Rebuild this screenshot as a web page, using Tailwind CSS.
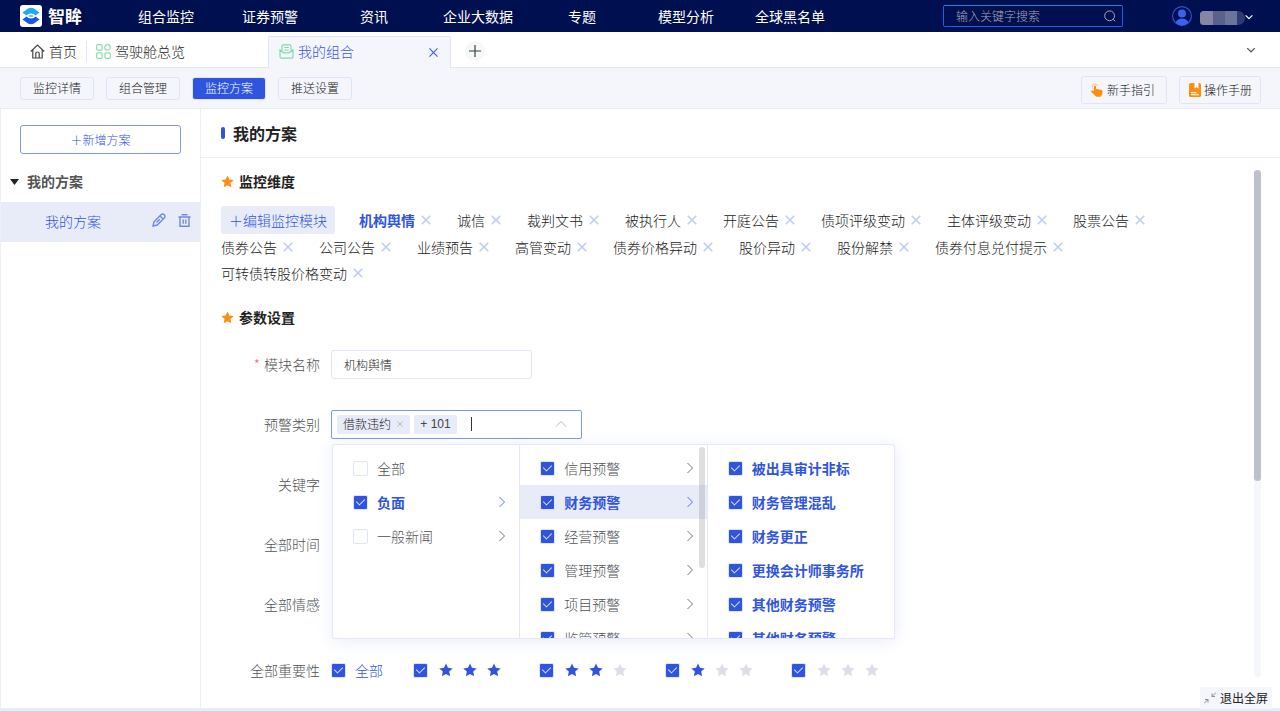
<!DOCTYPE html>
<html lang="zh-CN">
<head>
<meta charset="utf-8">
<meta name="viewport" content="width=device-width, initial-scale=1">
<title>智眸 - 我的组合</title>
<script src="https://cdn.jsdelivr.net/npm/@tailwindcss/browser@4"></script>
</head>
<body class="flex min-h-screen flex-col bg-[#f4f6fc] font-['Noto_Sans_CJK_SC',sans-serif] text-sm/5 font-light text-[#222] [&_button]:cursor-pointer">

<svg class="hidden" aria-hidden="true">
  <symbol id="x" viewBox="0 0 10 10"><path d="M.7.7l8.6 8.6M9.3.7L.7 9.3" fill="none" stroke="currentColor" stroke-width="1.6"/></symbol>
  <symbol id="right" viewBox="0 0 8 12"><path d="M1.500 1l5 5-5 5" fill="none" stroke="currentColor" stroke-opacity=".8"/></symbol>
  <symbol id="down" viewBox="0 0 12 8"><path d="M1 1.500l5 5 5-5" fill="none" stroke="currentColor" stroke-width="1.800"/></symbol>
  <symbol id="star" viewBox="0 0 14 14"><path d="M7 .5l2 4.300 4.700.6-3.500 3.200.9 4.700L7 11l-4.100 2.300.9-4.700L.3 5.400l4.700-.6z" fill="currentColor"/></symbol>
</svg>

<header class="flex h-8 items-center bg-[#000f4f] text-white">
  <a href="#" class="flex w-[114px] shrink-0 items-center gap-1.5 pl-5 text-[17px] font-bold">
    <svg class="size-[22px]" viewBox="0 0 22 22"><rect width="22" height="22" rx="3" fill="#fff"/><path d="M2.500 7.500L8 3.600Q11 2 14 3.600L19.500 7.500 15.500 10.600Q14 8.600 11 8.600T6.500 10.600z" fill="#25a6f7"/><path d="M2.500 14.500L6.500 11.400Q8 13.400 11 13.400t4.500-2L19.500 14.500 14 18.400Q11 20 8 18.400z" fill="#1456ee"/><path d="M8 11q3-2.200 6 0-3 2-6 0z" fill="#4dc6f8"/></svg>智眸</a>
  <nav class="flex text-center font-normal [&_a]:w-26">
    <a href="#">组合监控</a><a href="#">证券预警</a><a href="#">资讯</a><a href="#">企业大数据</a><a href="#">专题</a><a href="#">模型分析</a><a href="#">全球黑名单</a>
  </nav>
  <label class="ml-auto flex h-[22px] w-[180px] items-center rounded-xs border border-[#1460ef] border-t-[#2388d0] pr-1.5 pl-3">
    <input type="text" aria-label="搜索" placeholder="输入关键字搜索" class="min-w-0 flex-1 text-xs outline-none placeholder:text-[#a4a8b8]">
    <svg class="size-3 text-[#a4a8b8]" viewBox="0 0 12 12"><path d="M9.200 9.200l2 2.200M10.500 5.800a4.900 4.900 0 1 1-9.800 0 4.900 4.900 0 0 1 9.800 0z" fill="none" stroke="currentColor"/></svg>
  </label>
  <button class="mr-[27px] ml-[49px] flex items-center" aria-label="用户菜单">
    <svg class="mr-2 size-5" viewBox="0 0 20 20"><circle cx="10" cy="10" r="9.400" fill="none" stroke="#2c50dc" stroke-width="1.200"/><circle cx="10" cy="7.500" r="4" fill="#3a62ee"/><path d="M3.500 16.500Q5.500 12.500 10 12.500t6.500 4Q14 19.400 10 19.400t-6.500-2.900z" fill="#3a62ee"/></svg>
    <span class="mt-1 flex h-3.5 w-[45px] overflow-hidden rounded-r-lg rounded-l-sm"><i class="w-[13px] bg-[#8486a5]"></i><i class="w-3 bg-[#5a618c]"></i><i class="w-3 bg-[#6b749b]"></i><i class="flex-1 bg-[#2e3b73]"></i></span>
    <svg class="mt-0.5 h-1.5 w-2" viewBox="0 0 12 8"><use href="#down"/></svg>
  </button>
</header>

<div class="flex h-9 items-end border-b border-[#e1e6f7] bg-white">
  <a href="#" class="flex h-8 items-center gap-1 pr-[9px] pl-[30px]">
    <svg class="size-[15px]" viewBox="0 0 15 15" fill="none" stroke="#444" stroke-width="1.200"><path d="M.8 7.500L7.500 1l6.700 6.500M2.800 6v8h9.400V6M5.800 14V9.300q0-1.300 1.700-1.300t1.700 1.300V14"/></svg>首页</a>
  <a href="#" class="flex h-8 w-[182px] items-center before:mr-[9px] before:h-[21px] before:w-px before:bg-[#e1e6f7]">
    <svg class="mr-1 size-[15px]" viewBox="0 0 15 15" fill="none" stroke="#8fdcae" stroke-width="1.200"><rect x=".7" y=".7" width="5.400" height="5.400" rx="1"/><circle cx="11.500" cy="3.400" r="2.800"/><rect x=".7" y="8.900" width="5.400" height="5.400" rx="1"/><rect x="8.900" y="8.900" width="5.400" height="5.400" rx="1"/></svg>驾驶舱总览</a>
  <div class="-mb-px flex h-8 w-[183px] items-center rounded-t-xs border border-b-0 border-[#dfe4fa] bg-[#f4f6fc] pr-3 pb-[3px] pl-2.5 text-[#3c58dd]">
    <a href="#" class="flex items-center gap-1"><svg class="size-[15px]" viewBox="0 0 15 15" fill="none" stroke="#83d9ab" stroke-width="1.200"><path d="M3 6.500V2q0-1.200 1.200-1.200h6.600Q12 .8 12 2v4.500M5.200 3.500h4.600M5.200 6h4.600M1 6l4 2.800h5L14 6v7q0 1.200-1.200 1.200H2.200Q1 14.200 1 13z"/></svg>我的组合</a>
    <button class="mt-0.5 ml-auto" aria-label="关闭标签"><svg class="size-[9px]" viewBox="0 0 10 10"><path d="M.5.5l9 9M9.500.5l-9 9" stroke="currentColor" stroke-width="1.200"/></svg></button>
  </div>
  <button class="mb-1.5 ml-3.5 grid size-5 place-items-center rounded-full bg-[#f7f7f7]" aria-label="新增标签"><svg class="size-3" viewBox="0 0 12 12"><path d="M0 6h12M6 0v12" stroke="#34453a" stroke-width="1.200"/></svg></button>
  <button class="mr-6 mb-3.5 ml-auto" aria-label="展开标签列表"><svg class="h-1.5 w-2.5 text-[#555]" viewBox="0 0 12 8"><use href="#down"/></svg></button>
</div>

<div class="flex h-[41px] items-center gap-3 border-b border-[#e8ecf7] pr-[19px] pl-5 text-xs [&>button]:rounded-[3px] [&>button]:border [&>button]:border-[#dfe4fa]">
  <button class="h-[23px] w-[74px]">监控详情</button>
  <button class="h-[23px] w-[74px]">组合管理</button>
  <button class="h-[23px] w-[74px] bg-[#2f55de] text-white">监控方案</button>
  <button class="h-[23px] w-[74px]">推送设置</button>
  <button class="mt-[3px] ml-auto flex h-7 w-[86px] items-center gap-[3px] pl-2">
    <svg class="size-3.5" viewBox="0 0 14 14"><path d="M2.300 4.500A2.800 2.800 0 0 1 7.800 3" fill="none" stroke="#ffc27a"/><path d="M4 8V3.700q0-1.200 1-1.200t1 1.200V6l5 .8q1.700.4 1.600 2.200-.2 3-1.900 4.700H6.500Q4.800 12.500 1.300 9q-.6-.8.200-1.300t2.500.3z" fill="#ff8d12"/></svg>新手指引</button>
  <button class="mt-[3px] flex h-7 w-[82px] items-center gap-0.5 pl-2">
    <svg class="size-3.5" viewBox="0 0 14 14"><rect x="1" width="12" height="14" rx="1.500" fill="#ff8d12"/><path d="M6.500 0h4v5.500l-2-1.300-2 1.300zM3 9h5.500v1.200H3zM3 11.300h8v1H3z" fill="#fff"/></svg>操作手册</button>
</div>

<div class="flex flex-1 border-b-3 border-[#e8ecf6]">
  <aside class="flex w-[201px] shrink-0 flex-col border-x border-[#eceffa] bg-white">
    <button class="mx-[19px] mt-4 h-[29px] rounded-[3px] border border-[#7f98ed] text-xs text-[#2f50de]">＋新增方案</button>
    <h2 class="mt-[17px] flex items-center gap-2 pl-[9px] font-bold text-[#555]"><svg class="mt-0.5 h-1.5 w-[9px]" viewBox="0 0 9 6"><path d="M0 0h9L4.500 6z" fill="#222"/></svg>我的方案</h2>
    <div class="mt-[11px] flex h-10 items-center bg-[#e8ecf9] pr-[9px] pb-1 pl-11 text-[#3053df]">
      <a href="#" class="pt-0.5">我的方案</a>
      <button class="mr-3 ml-auto" aria-label="编辑方案"><svg class="size-3.5" viewBox="0 0 14 14" fill="none" stroke="#6f88e6" stroke-width="1.400"><path d="M1 13l1-4.200 7-7Q10.600.4 12.200 1.800T12.200 5l-7 7zM8 3l3 3M4.500 9.500l3.200-3.200"/></svg></button>
      <button aria-label="删除方案"><svg class="size-[13px]" viewBox="0 0 13 13" fill="none" stroke="#6f88e6" stroke-width="1.400"><path d="M.5 3h12M3.500.8h6M2 3v9.300h9V3M5.200 5.500v4.300M7.800 5.500v4.300"/></svg></button>
    </div>
  </aside>

  <main class="flex min-w-0 flex-1 flex-col bg-white">
    <h1 class="flex h-[49px] items-center gap-2 border-b border-[#eceffa] pl-5 text-base font-bold before:h-3 before:w-1 before:rounded-xs before:bg-[#2f55de]">我的方案</h1>
    <div class="flex flex-1 pl-5">
      <div class="min-w-0 flex-1 pt-[13px] pr-8">
        <h2 class="flex items-center gap-[5px] font-bold"><svg class="size-[13px] text-[#ff8d12]"><use href="#star"/></svg>监控维度</h2>
        <div class="mt-[15px] flex flex-wrap items-center [&>span]:mr-[26px] [&>span]:flex [&>span]:h-[26px] [&>span]:items-center [&>span]:gap-1.5 [&_svg]:size-2.5 [&_svg]:text-[#c0ccf7]">
          <button class="mr-6 h-7 rounded-[3px] bg-[#e8ecf9] px-2 text-[#3053df]">＋编辑监控模块</button>
          <span><strong class="font-bold text-[#2f55de]">机构舆情</strong><button aria-label="移除机构舆情"><svg><use href="#x"/></svg></button></span>
          <span>诚信<button aria-label="移除诚信"><svg><use href="#x"/></svg></button></span>
          <span>裁判文书<button aria-label="移除裁判文书"><svg><use href="#x"/></svg></button></span>
          <span>被执行人<button aria-label="移除被执行人"><svg><use href="#x"/></svg></button></span>
          <span>开庭公告<button aria-label="移除开庭公告"><svg><use href="#x"/></svg></button></span>
          <span>债项评级变动<button aria-label="移除债项评级变动"><svg><use href="#x"/></svg></button></span>
          <span>主体评级变动<button aria-label="移除主体评级变动"><svg><use href="#x"/></svg></button></span>
          <span>股票公告<button aria-label="移除股票公告"><svg><use href="#x"/></svg></button></span>
          <span>债券公告<button aria-label="移除债券公告"><svg><use href="#x"/></svg></button></span>
          <span>公司公告<button aria-label="移除公司公告"><svg><use href="#x"/></svg></button></span>
          <span>业绩预告<button aria-label="移除业绩预告"><svg><use href="#x"/></svg></button></span>
          <span>高管变动<button aria-label="移除高管变动"><svg><use href="#x"/></svg></button></span>
          <span>债券价格异动<button aria-label="移除债券价格异动"><svg><use href="#x"/></svg></button></span>
          <span>股价异动<button aria-label="移除股价异动"><svg><use href="#x"/></svg></button></span>
          <span>股份解禁<button aria-label="移除股份解禁"><svg><use href="#x"/></svg></button></span>
          <span>债券付息兑付提示<button aria-label="移除债券付息兑付提示"><svg><use href="#x"/></svg></button></span>
          <span>可转债转股价格变动<button aria-label="移除可转债转股价格变动"><svg><use href="#x"/></svg></button></span>
        </div>

        <h2 class="mt-[21px] flex items-center gap-[5px] font-bold"><svg class="size-[13px] text-[#ff8d12]"><use href="#star"/></svg>参数设置</h2>
        <form class="mt-[7px] text-[#505256] [&_input[type=checkbox]]:grid [&_input[type=checkbox]]:size-[15px] [&_input[type=checkbox]]:shrink-0 [&_input[type=checkbox]]:appearance-none [&_input[type=checkbox]]:justify-center [&_input[type=checkbox]]:rounded-xs [&_input[type=checkbox]]:border [&_input[type=checkbox]]:border-[#dfe4fa] [&_input:checked]:border-[#2f55de] [&_input:checked]:bg-[#2f55de] [&_input:checked]:before:mt-px [&_input:checked]:before:h-2 [&_input:checked]:before:w-[5px] [&_input:checked]:before:rotate-45 [&_input:checked]:before:border-r [&_input:checked]:before:border-b [&_input:checked]:before:border-white/80">
          <div class="flex h-15 items-center gap-[11px]">
            <label for="name" class="w-[99px] text-right"><span class="mr-1 text-[#f56c6c]">*</span>模块名称</label>
            <input id="name" type="text" value="机构舆情" class="h-[29px] w-[201px] rounded-[3px] border border-[#dfe4fa] px-3 text-xs text-[#222]">
          </div>
          <div class="relative flex h-15 items-center gap-[11px]">
            <label for="kind" class="w-[99px] text-right">预警类别</label>
            <div class="flex h-[29px] w-[251px] items-center gap-1 rounded-xs border border-[#7f98ed] pr-3.5 pl-[5px] text-xs text-[#222]">
              <span class="flex h-[19px] w-[73px] shrink-0 items-center gap-1.5 rounded-xs bg-[#e8ecf9] pl-1.5">借款违约<button type="button" aria-label="移除借款违约"><svg class="size-1.5 text-[#b5bac8]"><use href="#x"/></svg></button></span>
              <span class="flex h-[19px] w-[43px] shrink-0 items-center justify-center rounded-xs bg-[#e8ecf9] font-['Liberation_Sans','Noto_Sans_CJK_SC',sans-serif] font-normal text-[#444]">+ 101</span>
              <span class="ml-2.5 h-3.5 w-px bg-[#333]"></span>
              <input id="kind" type="text" role="combobox" aria-expanded="true" aria-controls="kinds" class="min-w-0 flex-1 outline-none">
              <svg class="h-2 w-3 rotate-180 text-[#b4b8c2]" viewBox="0 0 12 8"><path d="M1 1.500l5 5 5-5" fill="none" stroke="currentColor"/></svg>
            </div>
            <div id="kinds" class="absolute top-[50px] left-[111px] z-10 flex h-[195px] w-[563px] overflow-hidden rounded-[3px] border border-[#e4e8f8] bg-white shadow-[0_2px_16px_rgba(70,100,220,0.12)] [&_label]:flex [&_label]:h-[34px] [&_label]:items-center [&_label]:gap-[9px] [&_label]:pr-[13px] [&_label]:pl-5 [&_svg]:ml-auto [&_svg]:h-3 [&_svg]:w-2">
              <div class="flex-1 border-r border-[#e4e8f8] pt-1.5">
                <label><input type="checkbox">全部</label>
                <label class="font-bold text-[#2f55de]"><input type="checkbox" checked>负面<svg><use href="#right"/></svg></label>
                <label><input type="checkbox">一般新闻<svg><use href="#right"/></svg></label>
              </div>
              <div class="relative flex-1 border-r border-[#e4e8f8] pt-1.5">
                <label><input type="checkbox" checked>信用预警<svg><use href="#right"/></svg></label>
                <label class="bg-[#e8ecf9] font-bold text-[#2f55de]"><input type="checkbox" checked>财务预警<svg><use href="#right"/></svg></label>
                <label><input type="checkbox" checked>经营预警<svg><use href="#right"/></svg></label>
                <label><input type="checkbox" checked>管理预警<svg><use href="#right"/></svg></label>
                <label><input type="checkbox" checked>项目预警<svg><use href="#right"/></svg></label>
                <label><input type="checkbox" checked>监管预警<svg><use href="#right"/></svg></label>
                <i class="absolute top-0.5 right-0.5 h-[121px] w-1.5 rounded-full bg-[#909399]/30"></i>
              </div>
              <div class="flex-1 pt-1.5 font-bold text-[#2f55de]">
                <label><input type="checkbox" checked>被出具审计非标</label>
                <label><input type="checkbox" checked>财务管理混乱</label>
                <label><input type="checkbox" checked>财务更正</label>
                <label><input type="checkbox" checked>更换会计师事务所</label>
                <label><input type="checkbox" checked>其他财务预警</label>
                <label><input type="checkbox" checked>其他财务预警</label>
              </div>
            </div>
          </div>
          <div class="flex h-15 items-center"><span class="w-[99px] text-right">关键字</span></div>
          <div class="flex h-15 items-center"><span class="w-[99px] text-right">全部时间</span></div>
          <div class="flex h-15 items-center"><span class="w-[99px] text-right">全部情感</span></div>
          <div class="flex h-[72px] items-center [&_svg]:size-3.5 [&_svg]:text-[#2f55de] [&_svg.off]:text-[#dcdfe8]">
            <span class="mr-[11px] w-[99px] text-right">全部重要性</span>
            <label class="flex w-[82px] items-center gap-[9px] text-[#2f55de]"><input type="checkbox" checked>全部</label>
            <label class="flex w-[126px] items-center gap-2.5"><input type="checkbox" aria-label="三星" checked><svg class="ml-px"><use href="#star"/></svg><svg><use href="#star"/></svg><svg><use href="#star"/></svg></label>
            <label class="flex w-[126px] items-center gap-2.5"><input type="checkbox" aria-label="二星" checked><svg class="ml-px"><use href="#star"/></svg><svg><use href="#star"/></svg><svg class="off"><use href="#star"/></svg></label>
            <label class="flex w-[126px] items-center gap-2.5"><input type="checkbox" aria-label="一星" checked><svg class="ml-px"><use href="#star"/></svg><svg class="off"><use href="#star"/></svg><svg class="off"><use href="#star"/></svg></label>
            <label class="flex w-[126px] items-center gap-2.5"><input type="checkbox" aria-label="无星" checked><svg class="off ml-px"><use href="#star"/></svg><svg class="off"><use href="#star"/></svg><svg class="off"><use href="#star"/></svg></label>
          </div>
        </form>
      </div>
      <div class="mt-3 mr-[19px] mb-[31px] w-[7px] rounded-full bg-[#f4f6fc]"><div class="h-[311px] rounded-full bg-[#bcc1cb]"></div></div>
    </div>
  </main>
</div>

<button class="fixed right-2 bottom-0.5 z-20 flex h-[22px] items-center gap-1 rounded-xs bg-[#f4f6fc] px-1 text-xs font-normal text-[#222]">
  <svg class="size-3" viewBox="0 0 12 12" fill="none" stroke="#8a8f99"><path d="M0 11.500l4-4M1 7.500h3v3M12 .5l-4 4M11 4.500H8v-3"/></svg>退出全屏</button>
</body>
</html>
